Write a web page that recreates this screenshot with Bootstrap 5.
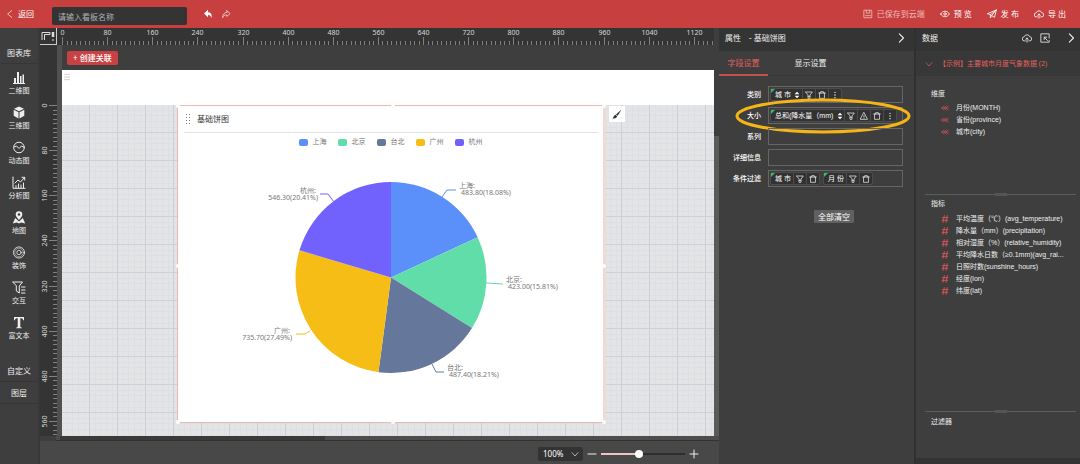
<!DOCTYPE html>
<html lang="zh-CN">
<head>
<meta charset="utf-8">
<meta name="viewport" content="width=device-width, initial-scale=1">
<title>看板编辑器</title>
<link href="https://cdn.jsdelivr.net/npm/bootstrap@5.3.0/dist/css/bootstrap.min.css" rel="stylesheet">
<style>
  :root { --brand: #c83f40; --panel: #3e3e3e; --dark: #343434; --line: #666; --accent: #e0605e; }
  body { font-family: "Noto Sans", "Noto Sans CJK SC", sans-serif; font-size: 8px; line-height: 12px; color: #eee; background: var(--panel); }
  button, input, select { font-family: inherit; }
  svg { display: block; }
  .ico { fill: none; stroke: currentColor; stroke-width: 1; stroke-linecap: round; stroke-linejoin: round; width: 10px; height: 10px; flex: none; }
  .ico .solid { fill: currentColor; stroke: none; }
  .plain { background: none; border: 0; padding: 0; color: inherit; font-size: inherit; line-height: inherit; text-decoration: none; display: flex; align-items: center; }
  .t7 { font-size: 7px; }

  .topbar { height: 28px; background: var(--brand); color: #fff; padding: 0 14px 0 6px; }
  .top-actions { gap: 15px; }
  .board-name { width: 135px; height: 18px; margin-left: 18px; padding: 0 6px; border: 0; border-radius: 2px; background: var(--dark); color: #eee; font-size: 8px; }
  .board-name::placeholder { color: #b0b0b0; opacity: 1; }
  .saved { color: #f0b9b6; }

  .body-row, .shrink-y { min-height: 0; }
  .shrink-x { min-width: 0; }
  .side { width: 40px; flex: none; border-right: 2px solid #383838; text-align: center; }
  .side-title { height: 36px; padding-top: 19px; border-bottom: 1px solid #363636; }
  .side-items { padding: 6px 0 10px; }
  .tool { height: 35px; width: 100%; flex-direction: column; justify-content: flex-start; gap: 1px; font-size: 7px; padding-top: 1px; }
  .tool .ico { width: 14px; height: 13px; }
  .side-tab { height: 22px; border-bottom: 1px solid #363636; justify-content: center; width: 100%; }

  .ruler-row { height: 17px; background: var(--dark); }
  .corner { width: 17px; flex: none; border-right: 1px solid #ccc; border-bottom: 1px solid #ccc; padding: 3px 1px; }
  .ruler-v { width: 17px; flex: none; background: var(--dark); position: relative; }
  .ruler-v svg { position: absolute; left: 0; top: 0; width: 17px; height: 100%; }
  .ruler-h { width: 100%; height: 17px; }
  .tick { stroke: #808080; stroke-width: 1; }
  .ruler-text { fill: #d8d8d8; font-size: 7px; text-anchor: middle; }
  .gutter { width: 5px; flex: none; background: #505050; }
  .stage-bar { height: 25px; padding: 6px 5px; }
  .link-btn { height: 14px; padding: 0 6px; font-size: 8px; line-height: 12px; font-weight: 500; border: 0; border-radius: 2px; background: #c94243; color: #fff; }
  .filter-band { height: 35px; background: #fff; color: #bbb; padding: 2px 1px; }
  .ico.narrow { width: 8px; }
  .grid-area {
    background-color: #e3e4e6;
    background-image:
      linear-gradient(90deg, transparent 27px, #cdd0d8 27px),
      linear-gradient(transparent 27px, #cdd0d8 27px),
      linear-gradient(90deg, transparent 5px, #dddfe2 5px 6px, transparent 6px 10px, #dddfe2 10px 11px, transparent 11px 16px, #dddfe2 16px 17px, transparent 17px 22px, #dddfe2 22px 23px, transparent 23px),
      linear-gradient(transparent 5px, #dddfe2 5px 6px, transparent 6px 10px, #dddfe2 10px 11px, transparent 11px 16px, #dddfe2 16px 17px, transparent 17px 22px, #dddfe2 22px 23px, transparent 23px);
    background-size: 28px 28px;
    padding-left: 115px;
  }
  .widget { width: 429px; height: 318px; background: #fff; border: 1px solid #f0b6b3; border-right: 3px solid #f0d9d9; color: #333; position: relative; }
  .handle { position: absolute; width: 4px; height: 4px; border-radius: 2px; background: #fff; }
  .handle.n { left: 50%; top: -2px; } .handle.s { left: 50%; bottom: -2px; }
  .handle.w { left: -2px; top: 50%; } .handle.e { right: -3px; top: 50%; }
  .handle.se { right: -3px; bottom: -2px; } .handle.sw { left: -2px; bottom: -2px; }
  .handle.nw { left: -2px; top: -2px; } .handle.ne { right: -3px; top: -2px; }
  .widget-head { height: 27px; margin: 0 5px 0 6px; padding-left: 2px; gap: 7px; border-bottom: 1px solid #e2e2e2; }
  .legend-row { gap: 11px; padding-top: 3px; color: #777; }
  .legend-item { gap: 5px; }
  .swatch { width: 9px; height: 7px; border-radius: 2px; }
  .pie-text { font-size: 7px; fill: #777; }
  .lead-line { fill: none; stroke-width: 1; }
  .brush { width: 16px; height: 16px; margin: 1px 0 0 3px; background: #fff; color: #333; justify-content: center; }
  .vscroll { width: 5px; flex: none; background: #585b5a; }
  .vscroll div { height: 108px; background: #3d3f3f; }
  .hscroll { height: 5px; background: #4d4d4d; border-bottom: 1px solid #333; }
  .hscroll div { width: 40%; height: 4px; background: #3a3a3a; }
  .zoombar { height: 23px; background: #484848; padding: 3px 20px 0 0; }
  .zoom-select { width: 45px; height: 14px; padding: 0 5px; font-size: 8px; line-height: 12px; color: #fff; border: 0; border-radius: 2px; background-color: #333; appearance: none; }
  .zoom-wrap { position: relative; }
  .zoom-wrap .ico { position: absolute; right: 4px; top: 3px; width: 8px; height: 8px; pointer-events: none; }
  .zoom-range { width: 84px; height: 10px; margin: 0 4px; appearance: none; background: linear-gradient(90deg, #efc4c2 45%, #2e2e2e 45%) center / 100% 2px no-repeat; }
  .zoom-range::-webkit-slider-thumb { appearance: none; width: 8px; height: 8px; border-radius: 50%; background: #fff; }

  .props { width: 197px; flex: none; border-right: 2px solid #303030; }
  .data { width: 164px; flex: none; border-bottom: 6px solid var(--dark); }
  .panel-head { height: 23px; background: var(--dark); padding: 0 8px 3px 6px; }
  .data .panel-head { padding-right: 4px; }
  .tab-row { height: 25px; gap: 18px; border-bottom: 1px solid #393939; }
  .tab-btn { width: 49px; height: 25px; justify-content: center; padding-top: 1px; border-bottom: 2px solid transparent; }
  .tab-btn.on { color: var(--accent); border-color: #c2504f; }
  .fields { padding: 10px 11px 0 0; gap: 4px; }
  .field-row { position: relative; gap: 7px; }
  .field-name { width: 42px; text-align: right; font-size: 7px; font-weight: 500; flex: none; color: #fff; }
  .drop { height: 17px; border: 1px solid var(--line); padding: 1px; gap: 3px; min-width: 0; }
  .chip { height: 13px; background: #323232; border: 1px solid #4c4c4c; border-radius: 2px; color: #fff; font: 7px/11px "Liberation Sans", "Noto Sans CJK SC", sans-serif; position: relative; white-space: nowrap; }
  .chip::before { content: ""; position: absolute; left: 0; top: 0; border: 2px solid transparent; border-top-color: #35c058; border-left-color: #35c058; }
  .chip-name { padding: 0 2px 0 4px; }
  .chip .cell { width: 13px; height: 11px; justify-content: center; border-left: 1px solid #4c4c4c; }
  .chip .cell .ico { width: 8px; height: 8px; }
  .chip .sort { width: 9px; justify-content: center; }
  .chip .sort .ico { width: 6px; height: 8px; }
  .ring { position: absolute; left: 16px; top: -9px; width: 176px; height: 36px; fill: none; stroke: #f5b518; stroke-width: 3; pointer-events: none; }
  .clear-btn { height: 13px; margin: 23px 0 0 95px; padding: 0 4px; font-size: 8px; line-height: 12px; background: #606060; color: #fff; border: 0; border-radius: 1px; }

  .dataset { height: 25px; width: 100%; padding: 0 9px; gap: 6px; background: #383838; color: var(--accent); font-size: 7px; }
  .dims { height: 118px; padding-top: 12px; }
  .measures { padding-top: 3px; }
  .filters { height: 46px; padding-top: 4px; }
  .group-title { padding-left: 15px; line-height: 12px; font-size: 7px; }
  .field-list { margin: 0; padding: 2px 0 0 25px; list-style: none; font: 7px/12px "Liberation Sans", "Noto Sans CJK SC", sans-serif; }
  .field-list li { display: flex; align-items: center; gap: 7px; white-space: nowrap; }
  .measures li { height: 12px; }
  .measures .field-list { padding-top: 3px; }
  .field-list .ico { width: 8px; height: 8px; color: #dc5555; }
  .splitter { margin: 0 4px 0 9px; height: 1px; background: #5c5c5c; display: flex; justify-content: center; }
  .splitter::after { content: ""; width: 12px; height: 3px; margin-top: -1px; background: #555; }
</style>
</head>
<body>
<svg width="0" height="0" class="position-absolute" aria-hidden="true">
  <symbol id="i-filter" viewBox="0 0 12 12"><path d="M1 1.500h10L7.500 6v2h-3V6zM4.500 8v3h3V8"/></symbol>
  <symbol id="i-trash" viewBox="0 0 12 12"><path d="M1 3h10M4 3V1h4v2M2.300 3v8h7.400V3"/></symbol>
  <symbol id="i-warn" viewBox="0 0 12 12"><path d="M6 1l5.300 10H.7zM6 5v2.500M6 9v.3"/></symbol>
  <symbol id="i-dots" viewBox="0 0 12 12"><g fill="currentColor" stroke="none"><circle cx="6" cy="2" r="1"/><circle cx="6" cy="6" r="1"/><circle cx="6" cy="10" r="1"/></g></symbol>
  <symbol id="i-sort" viewBox="0 0 8 12"><path fill="currentColor" stroke="none" d="M4 1l3.500 4h-7zM4 11L.5 7h7z"/></symbol>
  <symbol id="i-right" viewBox="0 0 12 12"><path d="M4 1l5 5-5 5" stroke-width="1.300"/></symbol>
  <symbol id="i-down" viewBox="0 0 12 12"><path d="M1.500 4L6 9l4.500-5"/></symbol>
  <symbol id="i-cloud" viewBox="0 0 12 12"><path d="M4 9.500H3a2.500 2.500 0 0 1-.3-5 3.500 3.500 0 0 1 6.600 0 2.500 2.500 0 0 1-.3 5H8M6 11V6M4.500 7.500L6 6l1.500 1.500"/></symbol>
  <symbol id="i-hash" viewBox="0 0 12 12"><path d="M5 1L3 11M9.500 1l-2 10M2 4h8.500M1.500 8H10" stroke-width="1.400"/></symbol>
  <symbol id="i-abc" viewBox="0 0 12 12"><path d="M4.500 3L1 6l3.500 3M8 3L4.500 6 8 9M11 3L8 6l3 3M1 6h9"/></symbol>
</svg>

<div class="d-flex flex-column vh-100 overflow-hidden">
  <header class="topbar d-flex align-items-center">
    <a href="#" class="plain gap-1"><svg class="ico narrow" viewBox="0 0 12 12"><path d="M8.500 1l-6 5 6 5"/></svg>返回</a>
    <input class="board-name mt-1" type="text" placeholder="请输入看板名称" aria-label="看板名称">
    <button class="plain ms-3" aria-label="撤销"><svg class="ico" viewBox="0 0 12 12"><path class="solid" d="M6 1v3c4 0 5 3 4 7-.6-2.700-1.500-3.800-4-3.800V10L1.300 5.500z"/></svg></button>
    <button class="plain ms-2 opacity-75" aria-label="重做"><svg class="ico" viewBox="0 0 12 12"><path d="M7 2l4 3.500L7 9V7C4 7 3 8 2 10.500 2 6.500 4 4 7 4z"/></svg></button>
    <div class="top-actions d-flex align-items-center ms-auto">
      <span class="d-flex align-items-center saved gap-1"><svg class="ico" viewBox="0 0 12 12"><path d="M1.500 1.500h9v9h-9zM4 1.500V5h4V1.500M3 8h6"/></svg>已保存到云端</span>
      <button class="plain gap-1"><svg class="ico" viewBox="0 0 12 12"><path d="M.7 6C3.500 1.500 8.500 1.500 11.300 6 8.500 10.500 3.500 10.500.7 6z"/><circle cx="6" cy="6" r="1.500"/></svg>预 览</button>
      <button class="plain gap-1"><svg class="ico" viewBox="0 0 12 12"><path d="M.8 5.500L11.300 1 9 10 5.500 8 4 10.800V7zM4 7l7.300-6L5.500 8"/></svg>发 布</button>
      <button class="plain gap-1"><svg class="ico"><use href="#i-cloud"/></svg>导 出</button>
    </div>
  </header>

  <div class="body-row d-flex flex-grow-1">
    <nav class="side">
      <div class="side-title">图表库</div>
      <div class="side-items">
        <button class="plain tool"><svg class="ico" viewBox="0 0 14 13"><path class="solid" d="M2 7h2v5H2zM5 1h2v11H5zM8 5h1.500v7H8zM10.500 3.500H12V12h-1.500zM1 12h12v1H1z"/></svg>二维图</button>
        <button class="plain tool"><svg class="ico" viewBox="0 0 14 13"><path class="solid" d="M7 .5l5 2.300-5 2.500-5-2.500zM1.700 3.800l4.800 2.400v6.300l-4.800-2.700zM12.300 3.800L7.500 6.200v6.300l4.800-2.700z"/></svg>三维图</button>
        <button class="plain tool"><svg class="ico" viewBox="0 0 14 13"><circle cx="7" cy="6.500" r="5.300"/><path d="M2 6l2.500-1L7 7.500 9.500 5l2 1"/></svg>动态图</button>
        <button class="plain tool"><svg class="ico" viewBox="0 0 14 13"><path d="M1 1v11.300h12M4 12V9.500M6.500 12V8M9 12V9M11.500 12V7M3 7l3-3 2.500 2 4-4.500M10 1.300h2.700V4"/></svg>分析图</button>
        <button class="plain tool"><svg class="ico" viewBox="0 0 14 13"><path class="solid" fill-rule="evenodd" d="M7 .3a3.300 3.300 0 0 1 3.300 3.300C10.300 6 7 9 7 9S3.700 6 3.700 3.600A3.300 3.300 0 0 1 7 .3zM7 2.200a1.300 1.300 0 1 0 0 2.600 1.300 1.300 0 0 0 0-2.600z"/><path class="solid" d="M3.200 7L7 10.500 10.800 7l2.400 5.500L9 11.500l-2 1-2-1-4.200 1z"/></svg>地图</button>
        <button class="plain tool"><svg class="ico" viewBox="0 0 14 13"><circle cx="7" cy="6.500" r="5.600" stroke-width=".8"/><circle cx="7" cy="6.500" r="4.300" stroke-width=".5"/><circle cx="7" cy="6.500" r="2.200" stroke-width=".8"/></svg>装饰</button>
        <button class="plain tool"><svg class="ico" viewBox="0 0 14 13"><path d="M1 1h9.500L7.300 5v7L4.300 10V5zM9.500 6H13M9.500 9H13M9.500 12H13"/></svg>交互</button>
        <button class="plain tool"><svg class="ico" viewBox="0 0 14 13"><path class="solid" d="M2 1h10v3.300h-.8C10.800 2.700 10.300 2.300 8.300 2.300v8.200c0 .8.400 1 1.500 1.100v.7H4.200v-.7c1.100-.1 1.500-.3 1.500-1.100V2.300c-2 0-2.500.4-2.900 2H2z"/></svg>富文本</button>
      </div>
      <button class="plain side-tab">自定义</button>
      <button class="plain side-tab">图层</button>
    </nav>

    <main class="shrink-x d-flex flex-column flex-grow-1">
      <div class="shrink-y d-flex flex-grow-1">
        <div class="shrink-x d-flex flex-column flex-grow-1">
          <div class="ruler-row d-flex">
            <div class="corner"><svg width="14" height="10" fill="none" stroke="#ddd"><path d="M1 9V1.500h8v2H3.500V9M12 8v2"/><path d="M12 1v5" stroke-width="2.500"/></svg></div>
            <div class="shrink-x flex-grow-1"><svg class="ruler-h" id="rulerH"></svg></div>
          </div>
          <div class="shrink-y d-flex flex-grow-1">
            <div class="ruler-v"><svg id="rulerV"></svg></div>
            <div class="gutter"></div>
            <div class="shrink-x d-flex flex-column flex-grow-1">
              <div class="stage-bar d-flex align-items-center"><button class="link-btn">+ 创建关联</button></div>
              <div class="filter-band"><svg class="ico narrow" viewBox="0 0 12 12"><path d="M2 2h8M2 6h8M2 10h8"/></svg></div>
              <div class="grid-area shrink-y d-flex align-items-start flex-grow-1">
                <section class="widget flex-shrink-0">
                  <div class="widget-head d-flex align-items-center">
                    <svg width="4" height="10" fill="#777"><path d="M0 0h1v1H0zM3 0h1v1H3zM0 3h1v1H0zM3 3h1v1H3zM0 6h1v1H0zM3 6h1v1H3zM0 9h1v1H0zM3 9h1v1H3z"/></svg>
                    <span>基础饼图</span>
                  </div>
                  <div class="legend-row d-flex justify-content-center t7" id="legend"></div>
                  <svg id="pie" width="425" height="270" viewBox="178 148 425 270"></svg>
                  <i class="handle n"></i><i class="handle s"></i><i class="handle w"></i><i class="handle e"></i>
                  <i class="handle nw"></i><i class="handle ne"></i><i class="handle sw"></i><i class="handle se"></i>
                </section>
                <button class="plain brush" aria-label="样式"><svg class="ico" viewBox="0 0 12 12"><path class="solid" d="M11.500.5L6.800 8.200 4.800 6.500zM4.200 7l2 1.700C5.500 11 3 11.500.5 11.500 2 10.500 2 7.500 4.200 7z"/></svg></button>
              </div>
            </div>
          </div>
        </div>
        <div class="vscroll"><div></div></div>
      </div>
      <div class="hscroll ms-3"><div class="ms-1"></div></div>
      <div class="zoombar d-flex align-items-center justify-content-end">
        <div class="zoom-wrap">
          <select class="zoom-select d-block" aria-label="缩放比例"><option>100%</option></select>
          <svg class="ico"><use href="#i-down"/></svg>
        </div>
        <button class="plain ms-1" aria-label="缩小"><svg class="ico" viewBox="0 0 10 10"><path d="M1 5h8"/></svg></button>
        <input class="zoom-range" type="range" min="0" max="100" value="45" aria-label="缩放">
        <button class="plain" aria-label="放大"><svg class="ico" viewBox="0 0 10 10"><path d="M1 5h8M5 1v8"/></svg></button>
      </div>
    </main>

    <aside class="props">
      <div class="panel-head d-flex align-items-center">
        <span>属性</span><span class="ms-2">- 基础饼图</span>
        <button class="plain ms-auto" aria-label="收起"><svg class="ico"><use href="#i-right"/></svg></button>
      </div>
      <div class="tab-row d-flex">
        <button class="plain tab-btn on">字段设置</button>
        <button class="plain tab-btn">显示设置</button>
      </div>
      <div class="fields d-flex flex-column">
        <div class="field-row d-flex align-items-center">
          <span class="field-name" id="f1">类别</span>
          <div class="drop d-flex flex-grow-1" role="group" aria-labelledby="f1">
            <div class="chip d-flex"><span class="chip-name">城 市</span><button class="plain sort" aria-label="排序"><svg class="ico"><use href="#i-sort"/></svg></button><button class="plain cell" aria-label="筛选"><svg class="ico"><use href="#i-filter"/></svg></button><button class="plain cell" aria-label="删除"><svg class="ico"><use href="#i-trash"/></svg></button><button class="plain cell" aria-label="更多"><svg class="ico"><use href="#i-dots"/></svg></button></div>
          </div>
        </div>
        <div class="field-row d-flex align-items-center">
          <span class="field-name" id="f2">大小</span>
          <div class="drop d-flex flex-grow-1" role="group" aria-labelledby="f2">
            <div class="chip d-flex"><span class="chip-name">总和(降水量（mm)</span><button class="plain sort" aria-label="排序"><svg class="ico"><use href="#i-sort"/></svg></button><button class="plain cell" aria-label="筛选"><svg class="ico"><use href="#i-filter"/></svg></button><button class="plain cell" aria-label="预警"><svg class="ico"><use href="#i-warn"/></svg></button><button class="plain cell" aria-label="删除"><svg class="ico"><use href="#i-trash"/></svg></button><button class="plain cell" aria-label="更多"><svg class="ico"><use href="#i-dots"/></svg></button></div>
          </div>
          <svg class="ring" viewBox="0 0 176 36"><ellipse cx="88" cy="18" rx="86" ry="16"/></svg>
        </div>
        <div class="field-row d-flex align-items-center"><span class="field-name" id="f3">系列</span><div class="drop flex-grow-1" role="group" aria-labelledby="f3"></div></div>
        <div class="field-row d-flex align-items-center"><span class="field-name" id="f4">详细信息</span><div class="drop flex-grow-1" role="group" aria-labelledby="f4"></div></div>
        <div class="field-row d-flex align-items-center">
          <span class="field-name" id="f5">条件过滤</span>
          <div class="drop d-flex flex-grow-1" role="group" aria-labelledby="f5">
            <div class="chip d-flex"><span class="chip-name">城 市</span><button class="plain cell" aria-label="筛选"><svg class="ico"><use href="#i-filter"/></svg></button><button class="plain cell" aria-label="删除"><svg class="ico"><use href="#i-trash"/></svg></button></div>
            <div class="chip d-flex"><span class="chip-name">月 份</span><button class="plain cell" aria-label="筛选"><svg class="ico"><use href="#i-filter"/></svg></button><button class="plain cell" aria-label="删除"><svg class="ico"><use href="#i-trash"/></svg></button></div>
          </div>
        </div>
      </div>
      <button class="clear-btn d-block">全部清空</button>
    </aside>

    <aside class="data d-flex flex-column">
      <div class="panel-head d-flex align-items-center">
        <span>数据</span>
        <button class="plain ms-auto" aria-label="上传"><svg class="ico"><use href="#i-cloud"/></svg></button>
        <button class="plain ms-2" aria-label="引用"><svg class="ico" viewBox="0 0 12 12"><path d="M11 6V1H1v10h10V9M5 8V5h3M5 5l4 4"/></svg></button>
        <button class="plain ms-3" aria-label="收起"><svg class="ico"><use href="#i-right"/></svg></button>
      </div>
      <button class="plain dataset"><svg class="ico narrow"><use href="#i-down"/></svg>【示例】主要城市月度气象数据 (2)</button>
      <section class="dims">
        <div class="group-title">维度</div>
        <ul class="field-list">
          <li><svg class="ico"><use href="#i-abc"/></svg>月份(MONTH)</li>
          <li><svg class="ico"><use href="#i-abc"/></svg>省份(province)</li>
          <li><svg class="ico"><use href="#i-abc"/></svg>城市(city)</li>
        </ul>
      </section>
      <div class="splitter"></div>
      <section class="measures flex-grow-1">
        <div class="group-title">指标</div>
        <ul class="field-list">
          <li><svg class="ico"><use href="#i-hash"/></svg>平均温度（℃）(avg_temperature)</li>
          <li><svg class="ico"><use href="#i-hash"/></svg>降水量（mm）(precipitation)</li>
          <li><svg class="ico"><use href="#i-hash"/></svg>相对湿度（%）(relative_humidity)</li>
          <li><svg class="ico"><use href="#i-hash"/></svg>平均降水日数（≥0.1mm)(avg_rai...</li>
          <li><svg class="ico"><use href="#i-hash"/></svg>日照时数(sunshine_hours)</li>
          <li><svg class="ico"><use href="#i-hash"/></svg>经度(lon)</li>
          <li><svg class="ico"><use href="#i-hash"/></svg>纬度(lat)</li>
        </ul>
      </section>
      <div class="splitter"></div>
      <section class="filters"><div class="group-title">过滤器</div></section>
    </aside>
  </div>
</div>

<script src="https://cdn.jsdelivr.net/npm/bootstrap@5.3.0/dist/js/bootstrap.bundle.min.js"></script>
<script>
  // Rulers: a label every 80 units, ten ticks between labels, as far as the ruler is long
  const scale = 45.13 / 80;
  function ruler(el, vertical, origin) {
    const box = el.getBoundingClientRect(), length = vertical ? box.height : box.width;
    let out = '';
    for (let i = 0; origin + i * 8 * scale < length; i++) {
      const p = Math.round(origin + i * 8 * scale) + 0.5, major = i % 10 === 0;
      const a = major ? 9 : 13;
      out += vertical ? `<path class="tick" d="M${a} ${p}H17"/>` : `<path class="tick" d="M${p} ${a}V17"/>`;
      if (major && p + 8 < length) out += vertical
        ? `<text class="ruler-text" transform="translate(7 ${p}) rotate(-90)">${i * 8}</text>`
        : `<text class="ruler-text" x="${p}" y="7">${i * 8}</text>`;
    }
    el.innerHTML = out;
  }
  function drawRulers() {
    ruler(document.getElementById('rulerH'), false, 5);
    ruler(document.getElementById('rulerV'), true, 60);
  }
  drawRulers();
  addEventListener('resize', drawRulers);

  // Pie: slice, leader line and label position of each city
  const cities = [
    { name: '上海', value: 483.80, pct: '18.08', color: '#5b8ff9', line: '442,197 447,190 456,190', x: 459, y: 188 },
    { name: '北京', value: 423.00, pct: '15.81', color: '#61ddaa', line: '486,283 503,284', x: 506, y: 282 },
    { name: '台北', value: 487.40, pct: '18.21', color: '#65789b', line: '432,364 436,372 444,372', x: 447, y: 370 },
    { name: '广州', value: 735.70, pct: '27.49', color: '#f6bd16', line: '310,331 305,334 296,334', x: 290, y: 333, end: true },
    { name: '杭州', value: 546.30, pct: '20.41', color: '#7262fd', line: '334,202 328,194 320,194', x: 316, y: 193, end: true }
  ];
  const total = cities.reduce((s, c) => s + c.value, 0), cx = 391, cy = 277.5, r = 95.5;
  const at = a => `${cx + r * Math.sin(a)} ${cy - r * Math.cos(a)}`;
  let angle = 0, svg = '';
  for (const c of cities) {
    const next = angle + c.value / total * 2 * Math.PI, anchor = c.end ? 'end' : 'start';
    svg += `<path fill="${c.color}" d="M${cx} ${cy}L${at(angle)}A${r} ${r} 0 0 1 ${at(next)}z"/>
      <polyline class="lead-line" stroke="${c.color}" points="${c.line}"/>
      <text class="pie-text" text-anchor="${anchor}" x="${c.x}" y="${c.y}">${c.name}:</text>
      <text class="pie-text" text-anchor="${anchor}" x="${c.x + 2}" y="${c.y + 7}">${c.value.toFixed(2)}(${c.pct}%)</text>`;
    angle = next;
  }
  document.getElementById('pie').innerHTML = svg;
  document.getElementById('legend').innerHTML = cities.map(c =>
    `<span class="legend-item d-flex align-items-center"><i class="swatch" style="background:${c.color}"></i>${c.name}</span>`).join('');
</script>
</body>
</html>
